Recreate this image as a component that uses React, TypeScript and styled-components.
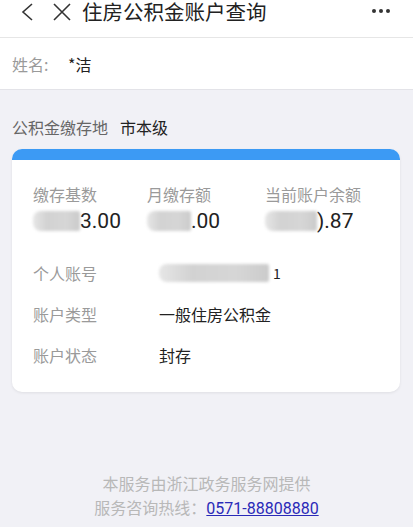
import styled, { createGlobalStyle } from 'styled-components';

const GlobalStyle = createGlobalStyle`
  html, body {
    margin: 0;
    padding: 0;
    background: #f1f1f6;
    font-family: "Noto Sans CJK SC", "Noto Sans", sans-serif;
  }
`;

const Page = styled.div`
  width: 413px;
  height: 527px;
  background: #f1f1f6;
  overflow: hidden;
  display: flex;
  flex-direction: column;
`;

const Header = styled.header`
  height: 38px;
  background: #fff;
  border-bottom: 1px solid #e6e6e6;
  display: flex;
  align-items: flex-start;
  padding: 1px 18px 0 17px;
  box-sizing: border-box;
`;

const IconBtn = styled.div<{ $gap?: number }>`
  width: 20px;
  height: 21px;
  margin-right: ${(p) => p.$gap ?? 0}px;
  display: flex;
  align-items: center;
  justify-content: center;
`;

const Title = styled.h1`
  margin: 0;
  font-size: 20.5px;
  line-height: 21px;
  font-weight: 400;
  color: #222;
  flex: 1;
`;

const More = styled.div`
  display: flex;
  gap: 3px;
  margin-top: 8px;
  margin-right: 5px;
  span {
    width: 4px;
    height: 4px;
    border-radius: 50%;
    background: #333;
  }
`;

const NameRow = styled.div`
  height: 51px;
  background: #fff;
  border-bottom: 1px solid #e3e3e8;
  display: flex;
  align-items: center;
  padding: 0 12px;
  font-size: 16px;
`;

const Muted = styled.span<{ $w?: number }>`
  color: #9a9a9a;
  width: ${(p) => (p.$w ? `${p.$w}px` : 'auto')};
  flex-shrink: 0;
`;

const Strong = styled.span`
  color: #222;
`;

const PlaceRow = styled.div`
  display: flex;
  align-items: center;
  padding: 0 12px;
  height: 36px;
  margin-top: 19px;
  font-size: 16px;
  gap: 12px;
`;

const PlaceLabel = styled.span`
  color: #666;
`;

const Card = styled.section`
  margin: 4px 13px 0 12px;
  background: #fff;
  border-radius: 10px;
  overflow: hidden;
  box-shadow: 0 1px 3px rgba(0, 0, 0, 0.08);
`;

const CardBar = styled.div`
  height: 11px;
  background: #3c9af4;
`;

const Stats = styled.div`
  display: grid;
  grid-template-columns: 114px 118px 1fr;
  padding: 23px 0 0 21px;
`;

const Stat = styled.div`
  display: flex;
  flex-direction: column;
  gap: 2px;
`;

const StatLabel = styled.span`
  font-size: 16px;
  line-height: 22px;
  color: #9a9a9a;
`;

const StatValue = styled.span`
  font-family: Roboto, "Noto Sans CJK SC", sans-serif;
  font-size: 21px;
  line-height: 28px;
  color: #222;
  display: flex;
  align-items: center;
`;

const Blur = styled.span<{ $w: number; $h?: number }>`
  display: inline-block;
  width: ${(p) => p.$w}px;
  height: ${(p) => p.$h ?? 20}px;
  background: linear-gradient(90deg, #e6e6e6 0%, #d2d2d2 30%, #d6d6d6 70%, #cbcbcb 100%);
  border-radius: 8px 2px 2px 8px;
  filter: blur(1.5px);
`;

const InfoList = styled.div`
  display: flex;
  flex-direction: column;
  padding: 26px 0 25px 21px;
  gap: 17px;
`;

const InfoRow = styled.div`
  display: flex;
  align-items: center;
  height: 24px;
  font-size: 16px;
`;

const InfoValue = styled.span`
  color: #222;
  display: flex;
  align-items: center;
`;

const Footer = styled.footer`
  margin-top: auto;
  padding-bottom: 6px;
  text-align: center;
  font-size: 16px;
  line-height: 24px;
  color: #b8b8b8;
`;

const Hotline = styled.a`
  color: #2a2ab8;
  text-decoration: underline;
  font-family: Roboto, "Noto Sans CJK SC", sans-serif;
  font-size: 16px;
`;

const App = () => {
  return (
    <>
      <GlobalStyle />
      <Page>
        <Header>
          <IconBtn $gap={15}>
            <svg width="16" height="18" viewBox="0 0 16 18">
              <path d="M13 1 L4 9 L13 17" fill="none" stroke="#333" strokeWidth="1.6" />
            </svg>
          </IconBtn>
          <IconBtn $gap={10}>
            <svg width="20" height="18" viewBox="0 0 20 18">
              <path d="M2 1 L18 17 M18 1 L2 17" fill="none" stroke="#333" strokeWidth="1.6" />
            </svg>
          </IconBtn>
          <Title>住房公积金账户查询</Title>
          <More>
            <span />
            <span />
            <span />
          </More>
        </Header>
        <NameRow>
          <Muted $w={56}>姓名:</Muted>
          <Strong>*洁</Strong>
        </NameRow>
        <PlaceRow>
          <PlaceLabel>公积金缴存地</PlaceLabel>
          <Strong>市本级</Strong>
        </PlaceRow>
        <Card>
          <CardBar />
          <Stats>
            <Stat>
              <StatLabel>缴存基数</StatLabel>
              <StatValue>
                <Blur $w={47} />
                3.00
              </StatValue>
            </Stat>
            <Stat>
              <StatLabel>月缴存额</StatLabel>
              <StatValue>
                <Blur $w={44} />
                .00
              </StatValue>
            </Stat>
            <Stat>
              <StatLabel>当前账户余额</StatLabel>
              <StatValue>
                <Blur $w={52} />
                ).87
              </StatValue>
            </Stat>
          </Stats>
          <InfoList>
            <InfoRow>
              <Muted $w={126}>个人账号</Muted>
              <InfoValue>
                <Blur $w={110} $h={18} />
                <span style={{ fontSize: 14, marginLeft: 4 }}>1</span>
              </InfoValue>
            </InfoRow>
            <InfoRow>
              <Muted $w={126}>账户类型</Muted>
              <InfoValue>一般住房公积金</InfoValue>
            </InfoRow>
            <InfoRow>
              <Muted $w={126}>账户状态</Muted>
              <InfoValue>封存</InfoValue>
            </InfoRow>
          </InfoList>
        </Card>
        <Footer>
          <div>本服务由浙江政务服务网提供</div>
          <div>
            服务咨询热线：<Hotline href="#">0571-88808880</Hotline>
          </div>
        </Footer>
      </Page>
    </>
  );
};

export default App;
